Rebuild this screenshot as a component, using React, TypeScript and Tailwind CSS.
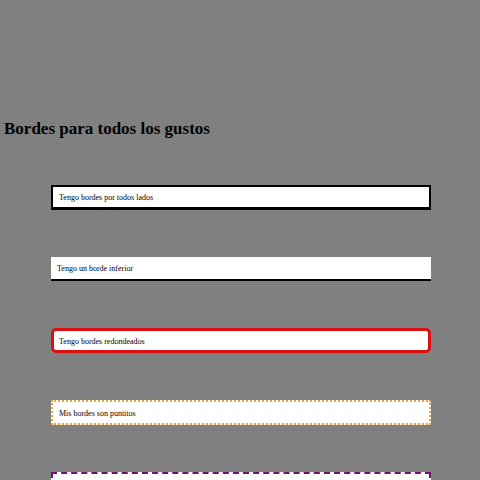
import React from "react";

const boxes = [
  { text: "Tengo bordes por todos lados", style: "h-[25px] border-2 border-b-[3px] border-black pl-[6px]" },
  { text: "Tengo un borde inferior", style: "h-6 border-b-2 border-black pl-[6px]" },
  { text: "Tengo bordes redondeados", style: "h-[25px] rounded-[5px] border-[3px] border-[#dc1010] pl-[5px]" },
  { text: "Mis bordes son puntitos", style: "h-[25px] border-2 border-dotted border-[#e5a73c] pl-[6px]" },
  { text: "", style: "h-[25px] border-2 border-dashed border-[#701070] pl-[6px]" },
];

export default function App() {
  return (
    <main className="h-screen overflow-hidden bg-[#808080] pt-[119px] font-['Liberation_Serif',serif] text-black">
      <h1 className="pl-1 text-[17px] leading-5 font-bold">Bordes para todos los gustos</h1>
      <div className="flex flex-col gap-[47px] pt-[46px] pr-[49px] pl-[51px]">
        {boxes.map((box, index) => (
          <p
            key={index}
            className={`flex shrink-0 items-center bg-white pt-[2px] text-[8px] leading-3 ${box.style}`}
          >
            {box.text}
          </p>
        ))}
      </div>
    </main>
  );
}
